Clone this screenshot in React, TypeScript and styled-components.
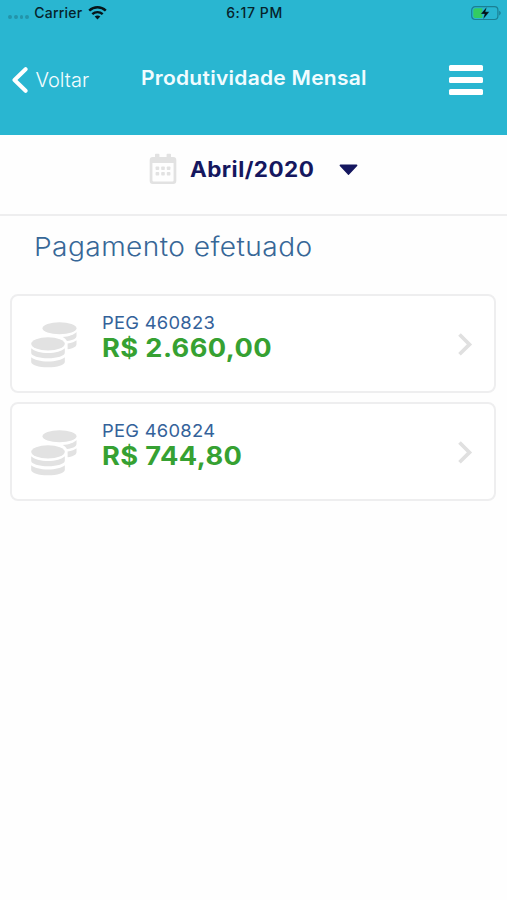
import React from "react";
import styled, { createGlobalStyle } from "styled-components";

const GlobalStyle = createGlobalStyle`
  * { box-sizing: border-box; }
  body {
    margin: 0;
    background: #fff;
    font-family: Inter, "Open Sans", sans-serif;
  }
  svg { display: block; flex: none; }
`;

const Screen = styled.div`
  width: 507px;
  height: 900px;
  overflow: hidden;
  background: #fefefe;
`;

const Header = styled.header`
  height: 135px;
  background: #29b6d1;
`;

const StatusBar = styled.div`
  display: grid;
  grid-template-columns: 1fr auto 1fr;
  align-items: center;
  height: 26px;
  padding: 0 6px 0 8px;
  color: #06232b;
  font-size: 14px;
  font-weight: 500;
  line-height: 26px;
`;

const Signal = styled.div`
  display: flex;
  align-items: center;
`;

const Dots = styled.div`
  display: flex;
  gap: 2px;
  margin: 8px 5px 0 0;
`;

const Dot = styled.i`
  width: 3.8px;
  height: 3.8px;
  border-radius: 50%;
  background: #2394aa;
`;

const Carrier = styled.span`
  margin-right: 5px;
  letter-spacing: 0.25px;
`;

const Clock = styled.span`
  letter-spacing: 0.6px;
`;

const Battery = styled.div`
  justify-self: end;
`;

const NavBar = styled.nav`
  display: grid;
  grid-template-columns: 130px 1fr 58px;
  align-items: center;
  height: 108px;
  padding-left: 12px;
  color: #fff;
`;

const BackButton = styled.button`
  display: flex;
  align-items: center;
  gap: 7.5px;
  padding: 0;
  border: 0;
  background: none;
  color: #f4fdff;
  font: 300 20px/26px Inter, sans-serif;
`;

const Title = styled.h1`
  margin: 0 0 5px -1px;
  color: #f1fcff;
  font-size: 20px;
  font-weight: 600;
  line-height: 26px;
  letter-spacing: 0.25px;
  white-space: nowrap;
  transform: scaleX(1.05);
  transform-origin: left;
`;

const MenuButton = styled.button`
  display: flex;
  flex-direction: column;
  gap: 5.8px;
  width: 34px;
  padding: 0;
  border: 0;
  background: none;
`;

const MenuLine = styled.span`
  height: 6px;
  border-radius: 1.5px;
  background: #fff;
`;

const MonthPicker = styled.div`
  display: flex;
  align-items: center;
  height: 81px;
  padding: 0 0 9px 149px;
  border-bottom: 2px solid #eeeeef;

  & > svg:first-child {
    margin-bottom: 2px;
  }
`;

const Month = styled.span`
  width: 149px;
  margin-left: 12.5px;
  color: #15175f;
  font-size: 21px;
  font-weight: 700;
  line-height: 28px;
  letter-spacing: 0.42px;

  & > span {
    display: inline-block;
    transform: scaleX(1.07);
    transform-origin: left;
  }
`;

const SectionTitle = styled.h2`
  height: 78px;
  margin: 0;
  padding: 14px 0 0 33.5px;
  color: #376797;
  font-size: 26px;
  font-weight: 300;
  line-height: 34px;
  letter-spacing: 0.4px;
  white-space: nowrap;

  & > span {
    display: inline-block;
    transform: scaleX(1.08);
    transform-origin: left;
  }
`;

const PaymentList = styled.main`
  display: grid;
  gap: 9px;
  padding: 0 11px 0 10px;
`;

const PaymentCard = styled.article`
  display: grid;
  grid-template-columns: 71px 1fr 16px;
  height: 99px;
  padding: 14px 21px 0 19px;
  border: 2px solid #eeeeef;
  border-radius: 8px;
  background: #fff;
`;

const CoinCell = styled.div`
  padding-top: 12px;
`;

const ArrowCell = styled.div`
  padding-top: 22px;
`;

const Code = styled.div`
  color: #34629a;
  font-size: 17.5px;
  line-height: 25px;
  letter-spacing: 0.25px;
  transform: scaleX(1.05);
  transform-origin: left;
`;

const Amount = styled.div`
  color: #36a132;
  font-size: 25px;
  font-weight: 700;
  line-height: 26px;
  letter-spacing: 0.36px;
  transform: scaleX(1.09);
  transform-origin: left;
`;

const WifiIcon = () => (
  <svg width="19" height="14" viewBox="0 0 19 14" fill="none" stroke="#06151a">
    <path d="M1.2 4.7C6 .2 13 .2 17.8 4.7" strokeWidth="2.5" />
    <path d="M4.3 8.2c3-2.8 7.4-2.8 10.4 0" strokeWidth="2.4" />
    <path d="M6.7 10.6c1.6-1.5 4-1.5 5.6 0L9.5 13.6Z" fill="#06151a" stroke="none" />
  </svg>
);

const BatteryIcon = () => (
  <svg width="30" height="16" viewBox="0 0 30 16">
    <rect x=".7" y="1.7" width="26.2" height="12.8" rx="3.5" fill="none" stroke="#1b7f93" strokeWidth="1.2" />
    <path d="M28.2 5.7c2 1 2 3.7 0 4.7Z" fill="#1b7f93" />
    <path d="M4.3 3.3h7v9.6h-7q-2 0-2-2V5.300q0-2 2-2Z" fill="#33cb62" />
    <path d="M15.7 1.9 9.7 9h3.8l-1.3 5.2 6.2-7.4h-3.9Z" fill="#041014" stroke="#29b6d1" strokeWidth=".3" />
  </svg>
);

const BackIcon = () => (
  <svg width="16" height="26" viewBox="0 0 16 26">
    <path d="M13.600 2.200 2.500 13 13.600 23.800" fill="none" stroke="#fff" strokeWidth="4" strokeLinejoin="round" strokeLinecap="round" />
  </svg>
);

const CalendarIcon = () => (
  <svg width="28" height="32" viewBox="0 0 28 32" fill="#e2e2e2">
    <path
      fillRule="evenodd"
      d="M6 1.5Q6 .7 6.8.7h2.8q.8 0 .8.8V4h7.2V1.5q0-.8.8-.8h2.8q.8 0 .8.8V4h2.3q3 0 3 3v21q0 3-3 3H3.7q-3 0-3-3V7q0-3 3-3H6ZM3.4 10v17.2q0 1.2 1.2 1.2h18.8q1.2 0 1.2-1.2V10Z"
    />
    {[13.5, 19].map((y) =>
      [6.600, 12.200, 17.800].map((x) => <rect key={`${x}-${y}`} x={x} y={y} width="3.6" height="3.6" rx=".8" />)
    )}
  </svg>
);

const CaretIcon = () => (
  <svg width="19" height="12" viewBox="0 0 19 12">
    <path d="M1.5 1.5h16L9.5 10Z" fill="#15175f" stroke="#15175f" strokeWidth="1.8" strokeLinejoin="round" />
  </svg>
);

const CoinsIcon = () => (
  <svg width="46" height="46" viewBox="0 0 46 46" fill="#e2e2e2">
    <ellipse cx="28.5" cy="6.3" rx="17" ry="6" />
    <path d="M45.5 10v4c0 2.4-3.4 4.3-9.6 5-.8-1.8-2.4-3.1-4.3-4 6.4-.4 11.6-2.3 13.9-5Z" />
    <path d="M45.5 18.3v4c0 2.3-3.2 4.3-8.9 5v-5.7c4.1-.6 7.3-1.8 8.9-3.3Z" />
    <ellipse cx="17" cy="21.8" rx="16.8" ry="6.6" />
    <path d="M.2 26.2C3.2 29.2 9.4 31 17 31s13.8-1.8 16.8-4.800v4.600c0 3.100-7.500 5.500-16.800 5.500S.2 33.900.2 30.800Z" />
    <path d="M.2 35.2c3 2.600 9.200 4.200 16.800 4.200s13.800-1.600 16.800-4.200v4.700c0 3-7.500 5.400-16.800 5.400S.2 42.900.2 39.900Z" />
  </svg>
);

const ArrowIcon = () => (
  <svg width="16" height="25" viewBox="0 0 16 25">
    <path d="m2.5 2.5 10 9.9-10 9.9" fill="none" stroke="#e0e0e0" strokeWidth="3.7" />
  </svg>
);

const payments = [
  { code: "PEG 460823", amount: "R$ 2.660,00" },
  { code: "PEG 460824", amount: "R$ 744,80" },
];

export default function App() {
  return (
    <Screen>
      <GlobalStyle />
      <Header>
        <StatusBar>
          <Signal>
            <Dots><Dot /><Dot /><Dot /><Dot /></Dots>
            <Carrier>Carrier</Carrier>
            <WifiIcon />
          </Signal>
          <Clock>6:17 PM</Clock>
          <Battery><BatteryIcon /></Battery>
        </StatusBar>
        <NavBar>
          <BackButton><BackIcon />Voltar</BackButton>
          <Title>Produtividade Mensal</Title>
          <MenuButton aria-label="Menu"><MenuLine /><MenuLine /><MenuLine /></MenuButton>
        </NavBar>
      </Header>
      <MonthPicker>
        <CalendarIcon />
        <Month><span>Abril/2020</span></Month>
        <CaretIcon />
      </MonthPicker>
      <SectionTitle><span>Pagamento efetuado</span></SectionTitle>
      <PaymentList>
        {payments.map(({ code, amount }) => (
          <PaymentCard key={code}>
            <CoinCell><CoinsIcon /></CoinCell>
            <div>
              <Code>{code}</Code>
              <Amount>{amount}</Amount>
            </div>
            <ArrowCell><ArrowIcon /></ArrowCell>
          </PaymentCard>
        ))}
      </PaymentList>
    </Screen>
  );
}
